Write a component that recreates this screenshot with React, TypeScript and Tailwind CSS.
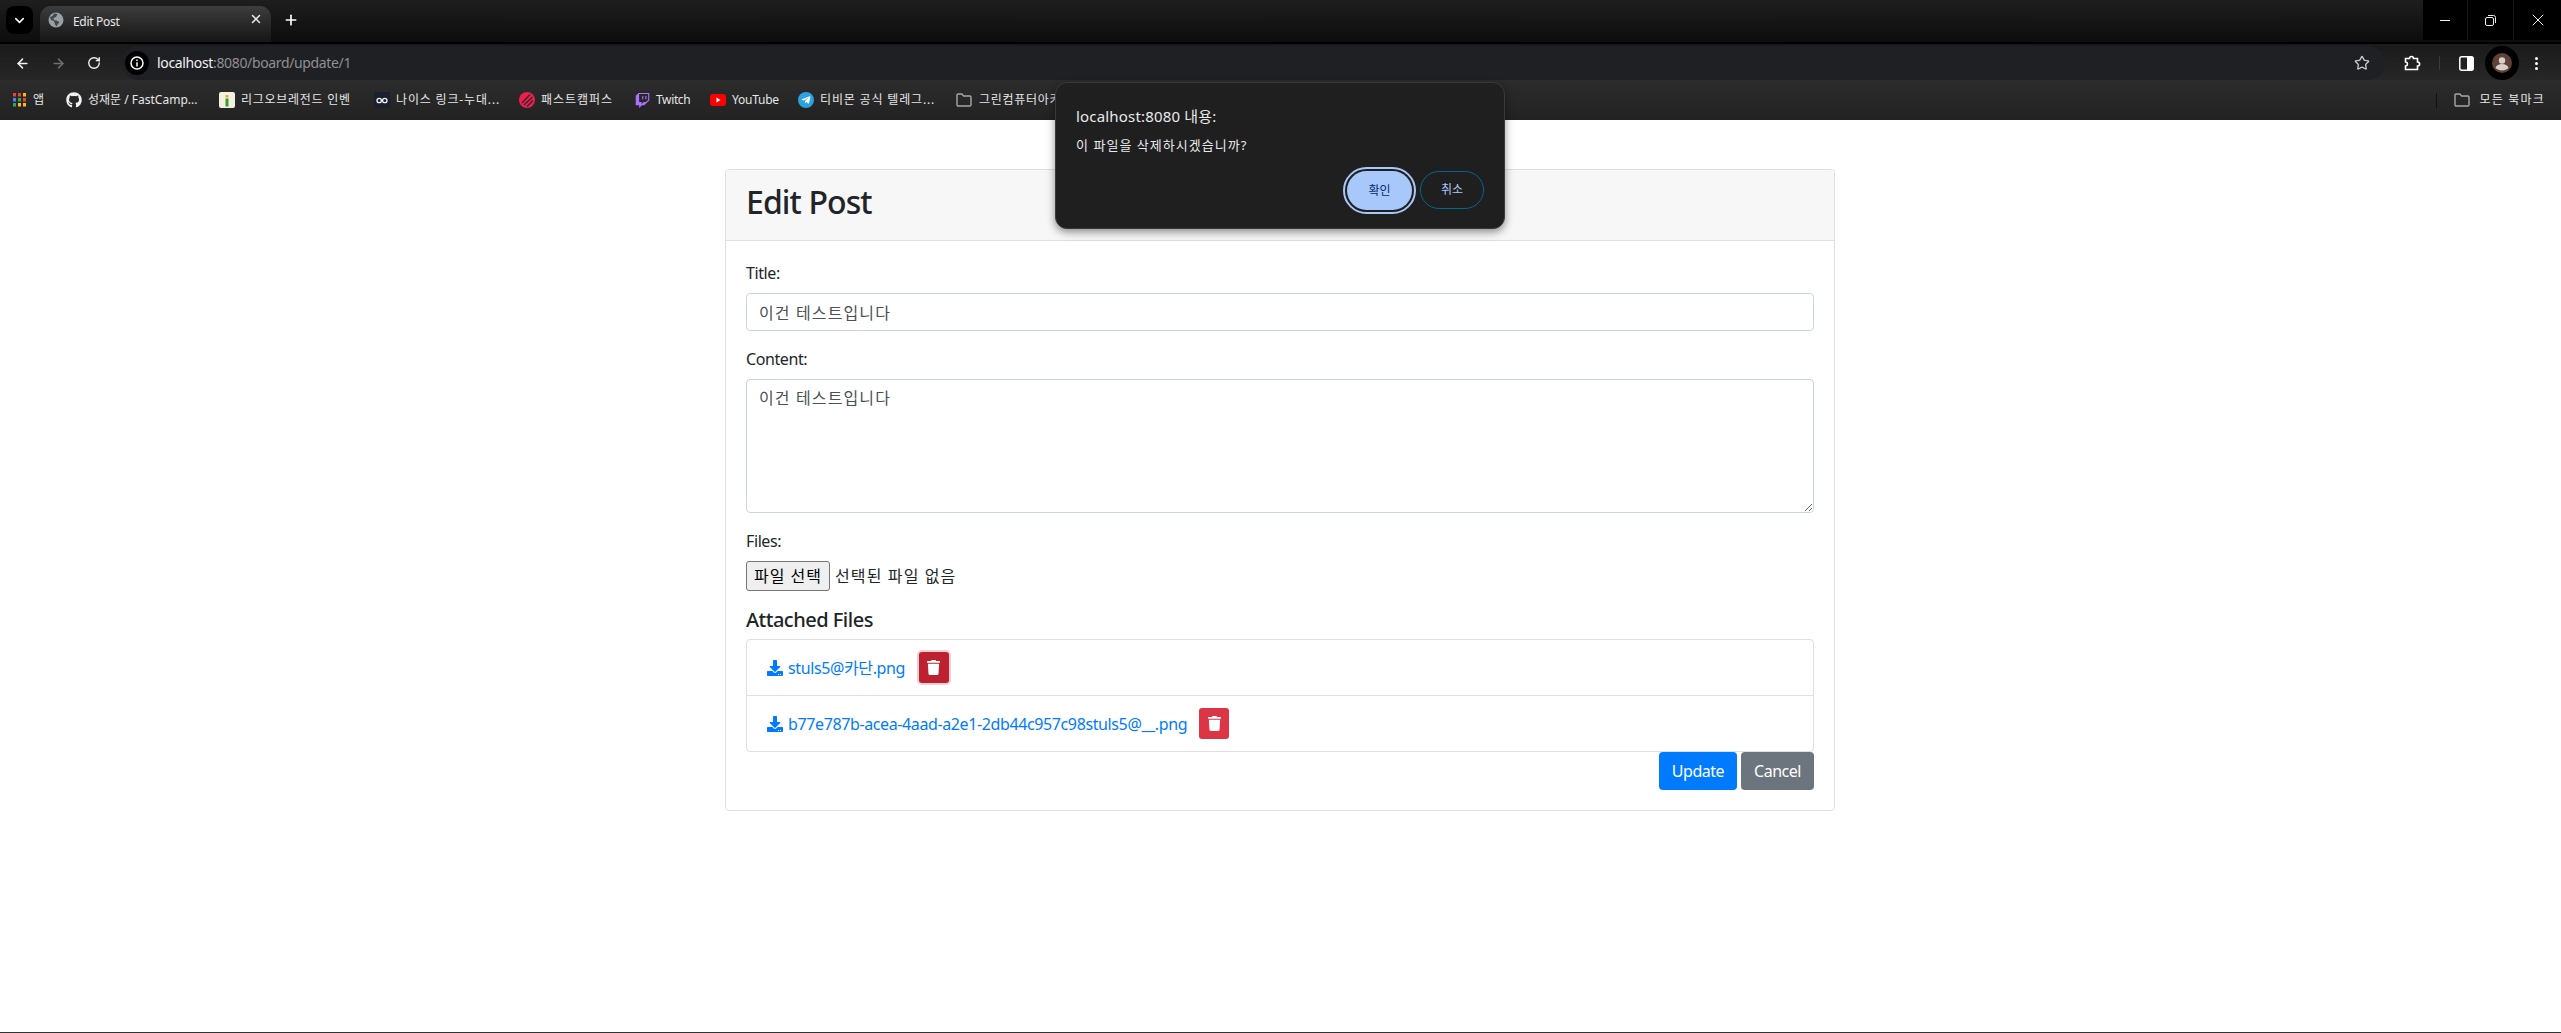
import React from "react";
import { FaDownload, FaTrash, FaGithub, FaTwitch, FaTelegramPlane } from "react-icons/fa";
import { ArrowLeft, ArrowRight, RotateCw, Star, X, Plus, ChevronDown } from "lucide-react";

const Folder = () => (
  <svg width="16" height="14" viewBox="0 0 16 14" fill="none" stroke="#a8a8a8" strokeWidth="1.4">
    <path d="M1 2.2C1 1.5 1.5 1 2.2 1h3.6l1.8 2h6.2c.7 0 1.2.5 1.2 1.2v7.6c0 .7-.5 1.2-1.2 1.2H2.2C1.500 13 1 12.500 1 11.800z" />
  </svg>
);

const Globe = () => (
  <svg width="16" height="16" viewBox="0 0 16 16">
    <circle cx="8" cy="8" r="7.5" fill="#9aa0a6" />
    <path d="M6 1.500 4.500 4 2 5l1 3 3 1 1 3.500 1.500 2L10 12l1.500-2-3-1.500L6 8 5.500 6 8 5l1.500-3z" fill="#2b2b2b" opacity="0.75" />
  </svg>
);

const Apps = () => (
  <svg width="13" height="14" viewBox="0 0 13 14">
    <rect x="0" y="0" width="3" height="3.500" fill="#ea4335" />
    <rect x="5" y="0" width="3" height="3.500" fill="#ea4335" />
    <rect x="10" y="0" width="3" height="3.500" fill="#fbbc04" />
    <rect x="0" y="5" width="3" height="3.500" fill="#4285f4" />
    <rect x="5" y="5" width="3" height="3.500" fill="#34a853" />
    <rect x="10" y="5" width="3" height="3.500" fill="#ea4335" />
    <rect x="0" y="10" width="3" height="3.500" fill="#34a853" />
    <rect x="5" y="10" width="3" height="3.500" fill="#fbbc04" />
    <rect x="10" y="10" width="3" height="3.500" fill="#fbbc04" />
  </svg>
);

const Lol = () => (
  <svg width="16" height="16" viewBox="0 0 16 16">
    <rect width="16" height="16" rx="2" fill="#f3f0e2" />
    <rect x="6.500" y="3" width="3" height="2.500" fill="#e0b020" />
    <rect x="6.500" y="6.500" width="3" height="8" fill="#3c9a2c" />
  </svg>
);

const Nice = () => (
  <svg width="16" height="16" viewBox="0 0 16 16" fill="none">
    <rect width="16" height="16" fill="#1b2030" />
    <circle cx="5.200" cy="8.500" r="2.200" stroke="#f0f0f0" strokeWidth="1.300" />
    <circle cx="10.800" cy="8.500" r="2.200" stroke="#f0f0f0" strokeWidth="1.300" />
  </svg>
);

const Fast = () => (
  <svg width="16" height="16" viewBox="0 0 16 16" fill="none">
    <circle cx="8" cy="8" r="8" fill="#ee1e4e" />
    <path d="M3 11 11 2.500M5 13 13.500 5M8 14.500l6-6" stroke="#2a2a2a" strokeWidth="1.200" />
  </svg>
);

const Youtube = () => (
  <svg width="16" height="12" viewBox="0 0 16 12">
    <rect width="16" height="12" rx="3" fill="#ff0000" />
    <path d="M6.500 3.500v5L10.500 6z" fill="#fff" />
  </svg>
);

const Bookmark = ({
  className,
  icon,
  label,
  labelClass,
}: {
  className: string;
  icon: React.ReactNode;
  label: string;
  labelClass?: string;
}) => (
  <div className={`flex items-center gap-[6px] shrink-0 ${className}`}>
    <span className="flex w-4 justify-center shrink-0">{icon}</span>
    <span className={`text-[12px] text-[#e6e6e6] whitespace-nowrap leading-none ${labelClass ?? ""}`}>{label}</span>
  </div>
);

function TabStrip() {
  return (
    <div className="flex h-[44px] border-b-2 border-black bg-gradient-to-b from-[#1e1e1e] to-[#0d0d0d]">
      <div className="ml-[6px] mt-[6px] flex h-[28px] w-[27px] items-center justify-center rounded-[8px] bg-black">
        <ChevronDown size={15} color="#fff" strokeWidth={2.500} />
      </div>
      <div className="ml-[7px] mt-[6px] flex h-[36px] w-[231px] items-start rounded-t-[11px] bg-gradient-to-b from-[#3d3d3d] to-[#161616] pl-[8px] pr-[8px] pt-[6px]">
        <Globe />
        <span className="ml-[9px] mt-[2px] text-[12px] leading-[16px] tracking-[-0.025em] text-[#e8e8e8]">Edit Post</span>
        <X className="ml-auto" size={14} color="#eee" strokeWidth={2.500} />
      </div>
      <div className="ml-[9px] mt-[9px] flex h-[22px] w-[22px] items-center justify-center rounded-full">
        <Plus size={16} color="#fff" strokeWidth={2.500} />
      </div>
      <div className="ml-auto flex h-[40px] bg-black">
        <div className="flex w-[45px] items-center justify-center border-r border-[#1a1a1a]">
          <div className="h-px w-[10px] bg-[#f0f0f0]" />
        </div>
        <div className="flex w-[46px] items-center justify-center border-r border-[#1a1a1a]">
          <svg width="11" height="11" viewBox="0 0 11 11" fill="none" stroke="#eee">
            <rect x="0.500" y="2.500" width="8" height="8" rx="1.500" />
            <path d="M3 .5h5.500a2 2 0 0 1 2 2V8" />
          </svg>
        </div>
        <div className="flex w-[47px] items-center justify-center">
          <X size={20} color="#f0f0f0" strokeWidth={1.200} />
        </div>
      </div>
    </div>
  );
}

function Toolbar() {
  return (
    <div className="flex h-[36px] items-center bg-gradient-to-b from-[#1a1a1a] to-[#272727] pt-[2px]">
      <div className="flex w-[36px] ml-[4px] justify-center"><ArrowLeft size={15} color="#f0f0f0" strokeWidth={2.400} /></div>
      <div className="flex w-[36px] justify-center"><ArrowRight size={15} color="#6f6f6f" strokeWidth={2.400} /></div>
      <div className="flex w-[36px] justify-center"><RotateCw size={14} color="#f0f0f0" strokeWidth={2.400} /></div>
      <div className="ml-[10px] flex h-[34px] w-[2263px] items-center rounded-full bg-[#1f2024] pl-[3px] pr-[15px]">
        <div className="flex h-[24px] w-[24px] items-center justify-center rounded-full bg-black">
          <svg width="14" height="14" viewBox="0 0 14 14" fill="none" stroke="#fff" strokeWidth="1.500">
            <circle cx="7" cy="7" r="6" />
            <path d="M7 6.200V10.500M7 3.500V5" />
          </svg>
        </div>
        <span className="ml-[8px] text-[14px] leading-none whitespace-nowrap tracking-[-0.025em] text-[#f2f2f2]">
          localhost<span className="text-[#8f8f8f]">:8080/board/update/1</span>
        </span>
        <Star className="ml-auto" size={16} color="#c8c8c8" strokeWidth={2} />
      </div>
      <div className="ml-[18px] flex w-[18px] justify-center">
        <svg width="17" height="16" viewBox="0 0 17 16" fill="none" stroke="#fff" strokeWidth="1.600">
          <path d="M1.500 7V3.500H5.500C5.500.8 9.500.8 9.500 3.500H13.500V7C16.300 7 16.300 11 13.500 11V14.500H1.500V11C4 11 4 7 1.500 7z" />
        </svg>
      </div>
      <div className="ml-[18px] h-[14px] w-px bg-[#3a3a3a]" />
      <div className="ml-[19px] flex w-[15px] justify-center">
        <svg width="15" height="15" viewBox="0 0 15 15">
          <rect x="0.800" y="0.800" width="13.400" height="13.400" rx="2" fill="none" stroke="#fff" strokeWidth="1.500" />
          <rect x="8" y="0.800" width="6.200" height="13.400" fill="#fff" />
        </svg>
      </div>
      <div className="ml-[11px] flex h-[34px] w-[34px] items-center justify-center rounded-full bg-black">
        <svg width="20" height="20" viewBox="0 0 20 20">
          <circle cx="10" cy="10" r="10" fill="#5f4138" />
          <circle cx="10" cy="7.500" r="3.200" fill="#d9cfca" />
          <path d="M3.500 15c1-3 3.500-4 6.500-4s5.500 1 6.500 4c-1.500 1.600-4 2.500-6.500 2.500S5 16.600 3.500 15z" fill="#d9cfca" />
        </svg>
      </div>
      <div className="ml-[16px] flex flex-col gap-[2px]">
        <span className="h-[3px] w-[3px] rounded-full bg-white" />
        <span className="h-[3px] w-[3px] rounded-full bg-white" />
        <span className="h-[3px] w-[3px] rounded-full bg-white" />
      </div>
    </div>
  );
}

function BookmarkBar() {
  return (
    <div className="flex h-[40px] items-center overflow-hidden bg-gradient-to-b from-[#2c2c2c] to-[#222222] pl-[11px]">
      <Bookmark className="w-[55px]" icon={<Apps />} label="앱" />
      <Bookmark className="w-[153px]" icon={<FaGithub size={16} color="#f2f2f2" />} label="성재문 / FastCamp..." />
      <Bookmark className="w-[155px]" icon={<Lol />} label="리그오브레전드 인벤" labelClass="tracking-[0.06em]" />
      <Bookmark className="w-[145px]" icon={<Nice />} label="나이스 링크-누대..." labelClass="tracking-[0.07em]" />
      <Bookmark className="w-[115px]" icon={<Fast />} label="패스트캠퍼스" labelClass="tracking-[0.08em]" />
      <Bookmark className="w-[76px]" icon={<FaTwitch size={15} color="#a970ff" />} label="Twitch" labelClass="tracking-[-0.03em]" />
      <Bookmark className="w-[88px]" icon={<Youtube />} label="YouTube" labelClass="tracking-[-0.02em]" />
      <Bookmark
        className="w-[158px]"
        icon={
          <span className="flex h-4 w-4 items-center justify-center rounded-full bg-[#2aa3e0]">
            <FaTelegramPlane size={10} color="#fff" />
          </span>
        }
        label="티비몬 공식 텔레그..."
        labelClass="tracking-[0.07em]"
      />
      <Bookmark className="w-[120px]" icon={<Folder />} label="그린컴퓨터아카데미" labelClass="ml-px tracking-[0.06em]" />
      <div className="ml-auto h-[15px] w-px bg-[#111111]" />
      <div className="ml-[17px] flex items-center gap-[9px] pr-[16px]">
        <Folder />
        <span className="text-[12px] leading-none tracking-[0.1em] text-[#e6e6e6]">모든 북마크</span>
      </div>
    </div>
  );
}

const Label = ({ children }: { children: React.ReactNode }) => (
  <label className="mb-2 block text-[16px] leading-[24px] tracking-[-0.025em] text-[#212529]">{children}</label>
);

function FileRow({ name, focused }: { name: string; focused?: boolean }) {
  return (
    <li className="flex h-[56px] items-center border-t border-[#dfdfdf] pl-5 first:h-[55px] first:border-t-0">
      <a className="flex items-center text-[16px] leading-[24px] tracking-[-0.024em] text-[#007bff]">
        <FaDownload size={16} className="mr-[5px]" />
        {name}
      </a>
      {focused ? (
        <button className="ml-[14px] flex h-[31px] w-[30px] items-center justify-center rounded-[3px] bg-[#bd2130] text-white ring-2 ring-[#f6cdd2]">
          <FaTrash size={15} />
        </button>
      ) : (
        <button className="ml-3 flex h-[31px] w-[30px] items-center justify-center rounded-[3px] bg-[#dc3545] text-white">
          <FaTrash size={15} />
        </button>
      )}
    </li>
  );
}

function Card() {
  return (
    <div className="ml-[725px] mt-[49px] w-[1110px] rounded-[4px] border border-[#dfdfdf] bg-white">
      <div className="h-[71px] rounded-t-[3px] border-b border-[#dfdfdf] bg-[#f7f7f7] px-5 pt-[13px]">
        <h2 className="text-[32px] font-medium leading-[38px] tracking-[-0.028em] text-[#212529]">Edit Post</h2>
      </div>
      <div className="p-5">
        <div className="mb-4">
          <Label>Title:</Label>
          <input
            readOnly
            value="이건 테스트입니다"
            className="block h-[38px] w-full rounded-[4px] border border-[#ced4da] bg-white px-3 text-[16px] tracking-[0.07em] text-[#495057] outline-none"
          />
        </div>
        <div className="mb-4">
          <Label>Content:</Label>
          <textarea
            readOnly
            rows={5}
            value="이건 테스트입니다"
            className="block h-[134px] w-full resize-y rounded-[4px] border border-[#ced4da] bg-white px-3 py-[6px] text-[16px] leading-[24px] tracking-[0.07em] text-[#495057] outline-none"
          />
        </div>
        <div className="mb-4">
          <Label>Files:</Label>
          <div className="flex h-[30px] items-center text-[16px] text-[#212529]">
            <button className="h-[30px] w-[84px] rounded-[3px] border border-[#767676] bg-[#efefef] text-[16px] leading-none tracking-[0.06em] text-black">
              파일 선택
            </button>
            <span className="ml-[5px] tracking-[0.07em]">선택된 파일 없음</span>
          </div>
        </div>
        <h5 className="mb-2 pt-px text-[20px] font-medium leading-[23px] tracking-[-0.025em] text-[#212529]">Attached Files</h5>
        <ul className="rounded-[4px] border border-[#dfdfdf]">
          <FileRow name="stuls5@카단.png" focused />
          <FileRow name="b77e787b-acea-4aad-a2e1-2db44c957c98stuls5@__.png" />
        </ul>
        <div className="flex justify-end gap-1">
          <button className="h-[38px] w-[78px] rounded-[4px] bg-[#007bff] text-[16px] tracking-[-0.03em] text-white">Update</button>
          <button className="h-[38px] w-[73px] rounded-[4px] bg-[#6c757d] text-[16px] tracking-[-0.03em] text-white">Cancel</button>
        </div>
      </div>
    </div>
  );
}

function Dialog() {
  return (
    <div className="absolute left-[1055px] top-[82px] h-[147px] w-[450px] rounded-[12px] border border-[#3a3a3a] bg-[#1f1f1f] px-5 pt-[21px] shadow-[0_3px_8px_rgba(0,0,0,0.45)]">
      <div className="text-[15px] leading-[24px] tracking-[0.012em] text-[#e8eaed]">localhost:8080 내용:</div>
      <div className="mt-[8px] text-[13px] leading-[18px] tracking-[0.08em] text-[#e8eaed]">이 파일을 삭제하시겠습니까?</div>
      <div className="mt-[17px] flex justify-end gap-[6px] pr-0">
        <button className="h-[39px] w-[65px] rounded-full bg-[#a8c7fa] text-[12px] text-[#062e6f] outline-2 outline-offset-[2px] outline-[#a8c7fa]">
          확인
        </button>
        <button className="ml-[2px] h-[38px] w-[64px] rounded-full border border-[#04668f] text-[12px] text-[#a8c7fa]">
          취소
        </button>
      </div>
    </div>
  );
}

export default function App() {
  return (
    <div className="relative flex h-[1033px] flex-col overflow-hidden border-b border-[#333333] bg-white font-['Noto_Sans','Noto_Sans_CJK_KR',sans-serif]">
      <TabStrip />
      <Toolbar />
      <BookmarkBar />
      <Card />
      <Dialog />
    </div>
  );
}
